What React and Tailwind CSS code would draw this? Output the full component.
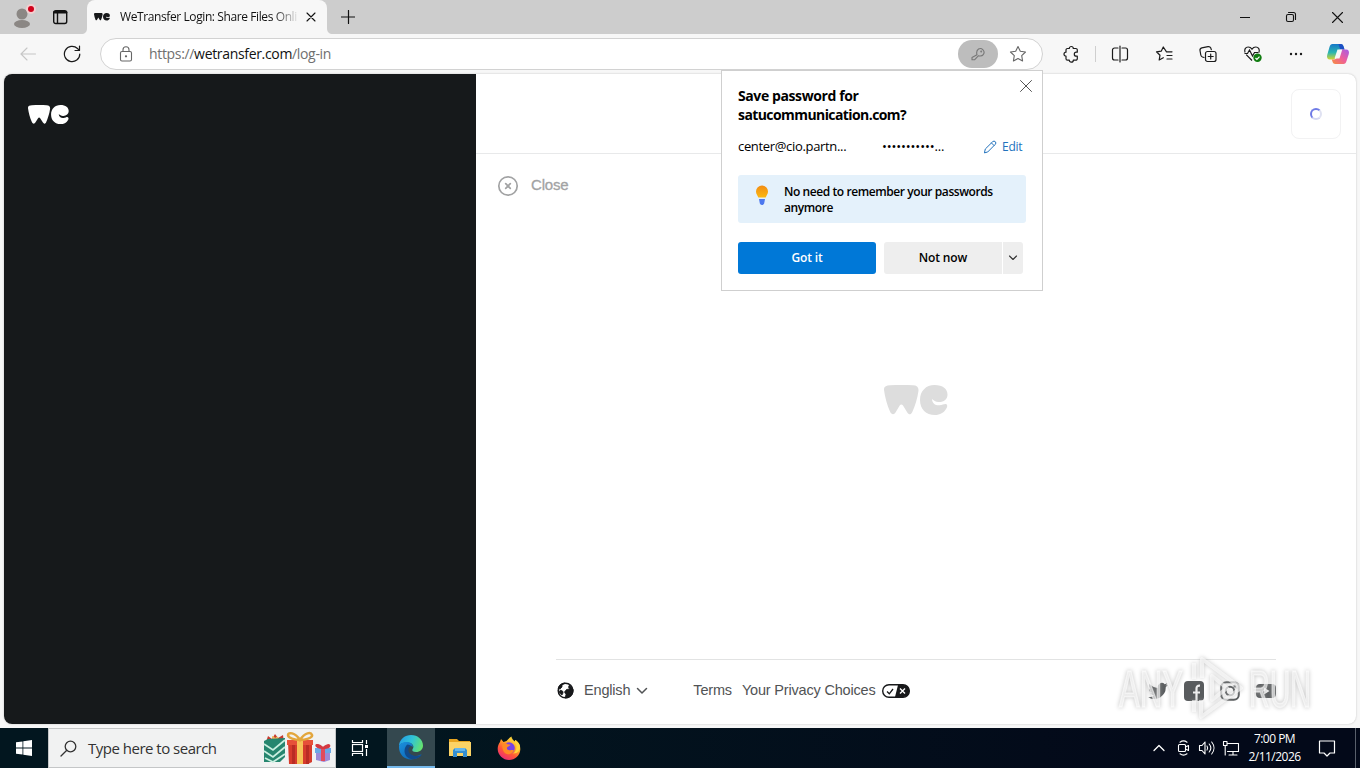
import React, { useState } from 'react';

const Icon = ({ w = 20, h = 20, className = '', sw = 1.1, children }) => (
  <svg
    width={w}
    height={h}
    viewBox={`0 0 ${w} ${h}`}
    fill="none"
    stroke="currentColor"
    strokeWidth={sw}
    strokeLinecap="round"
    strokeLinejoin="round"
    className={`shrink-0 ${className}`}
  >
    {children}
  </svg>
);

const WeLogo = ({ width, className }) => (
  <svg width={width} viewBox="0 0 64 30" fill="currentColor" className={`shrink-0 ${className}`}>
    <path d="M0 5C-.3 1.5 2 .3 6 .2 14 0 22 0 29 .2c4 .2 6 2 5.400 6C33.500 13 31 21 28.300 27c-1.400 3-3.500 3-5 .5L19 20.500c-1-1.500-2.400-1.500-3.300 0L11.500 27.500C10 30 7.500 29.800 6 26.500 3 20 1 12 0 5Z" />
    <path d="M50.500 0C59 0 63.500 4 63.500 9.500c0 5-4 7.800-9 7.500-3-.2-4.800-1.500-6.500-3 .2 4.500 3.500 6.700 7.500 6.300 3-.3 5-1.800 6.500-1.300 1.800.6 1.600 3 0 5C60 27.500 56 30 51 30c-9 0-15-6-15-15S42 0 50.500 0Z" />
  </svg>
);

const TabBar = () => (
  <div className="flex h-[34px] bg-[#cdcdcd] text-[#111]">
    <div className="flex w-[87px] items-center pl-3">
      <svg width="24" height="28" viewBox="0 0 24 28">
        <circle cx="10" cy="11" r="5.500" fill="#8b8784" />
        <ellipse cx="10" cy="21" rx="8" ry="4" fill="#8b8784" />
        <circle cx="19" cy="6" r="5" fill="#f3cfd0" />
        <circle cx="19" cy="6" r="3" fill="#d0021b" />
      </svg>
      <Icon w={16} h={16} sw={1.4} className="ml-4">
        <rect x="1.700" y="1.700" width="13" height="12.800" rx="2" />
        <path d="M2.500 3.300h11.500" strokeWidth="2.500" />
        <path d="M5.500 4v10" />
      </Icon>
    </div>
    <div className="relative flex w-60 items-center rounded-t-lg bg-[#f7f7f7] pl-[7px]">
      <svg width="6" height="6" className="absolute bottom-0 -left-1.5" viewBox="0 0 6 6">
        <path d="M6 0v6H0c4 0 6-2 6-6Z" fill="#f7f7f7" />
      </svg>
      <svg width="6" height="6" className="absolute -right-1.5 bottom-0" viewBox="0 0 6 6">
        <path d="M0 0v6h6C2 6 0 4 0 0Z" fill="#f7f7f7" />
      </svg>
      <WeLogo width={16} className="text-[#17181a]" />
      <span className="ml-2.5 w-[180px] bg-linear-to-r from-[#111] from-85% to-[#11111100] bg-clip-text text-[12px] tracking-[-0.4px] whitespace-nowrap text-transparent">
        WeTransfer Login: Share Files Onli
      </span>
      <Icon w={10} h={10} className="ml-[6px]" sw={1.1}>
        <path d="M1 1l8 8M9 1l-8 8" />
      </Icon>
    </div>
    <div className="flex flex-1 items-center pl-[14px]">
      <Icon w={14} h={14} sw={1.2}>
        <path d="M7.500 .5v13M.5 7h14" />
      </Icon>
    </div>
    <div className="flex w-[138px] items-center justify-around">
      <Icon w={10} h={10}>
        <path d="M0 5.500h10" />
      </Icon>
      <Icon w={12} h={12}>
        <rect x="1.500" y="3.500" width="7" height="7" rx="1.500" />
        <path d="M3.500 1.500h5a2 2 0 0 1 2 2v5" />
      </Icon>
      <Icon w={11} h={11}>
        <path d="M.5.5l10 10M10.500.5l-10 10" />
      </Icon>
    </div>
  </div>
);

const CopilotLogo = () => (
  <svg width="24" height="22" viewBox="0 0 24 22">
    <defs>
      <linearGradient id="cpBlue" x1="0" y1="0" x2="0" y2="1">
        <stop offset="0" stopColor="#1577c9" />
        <stop offset=".55" stopColor="#2bb6b0" />
        <stop offset="1" stopColor="#d5d52f" />
      </linearGradient>
      <linearGradient id="cpPink" x1="1" y1="0" x2="0" y2="1">
        <stop offset="0" stopColor="#a45be8" />
        <stop offset=".5" stopColor="#ee5d9c" />
        <stop offset="1" stopColor="#f6903c" />
      </linearGradient>
    </defs>
    <path d="M6.500 1h8c2 0 2.700 1.300 3.200 3l.8 2.500h-3.500c-2 0-3 1-3.500 2.500l-1.500 5c-.6 1.700-1.500 2.500-3.300 2.500H4C1.500 16.500.5 14.500 1.200 12L3.500 4C4 2 5 1 6.500 1Z" fill="url(#cpBlue)" />
    <path d="M12.500 1h2c2 0 2.700 1.300 3.200 3l.8 2.500h-3c-1 0-1.500-.5-1.800-1.500Z" fill="#1d4fc4" />
    <path d="M17.500 21h-8c-2 0-2.700-1.300-3.200-3l-.5-1.500h2c2 0 2.800-1 3.300-2.500l1.500-5c.6-1.700 1.500-2.500 3.300-2.500H20c2.500 0 3.500 2 2.800 4.500L20.500 18c-.5 2-1.500 3-3 3Z" fill="url(#cpPink)" />
    <path d="M11.500 6.500h4.800l-2.800 9h-5Z" fill="#f7f7f7" />
  </svg>
);

const Toolbar = () => (
  <div className="flex h-10 items-center bg-[#f7f7f7] text-[#1b1b1b]">
    <Icon w={16} h={14} className="ml-5 text-[#c6c6c6]">
      <path d="M15.500 7H1M7 1L1 7l6 6" />
    </Icon>
    <Icon w={18} h={18} sw={1.2} className="ml-[27px]">
      <path d="M16.800 9a7.700 7.700 0 1 1-2.300-5.500L16.300 5.300M16.500 1v4.500H12" />
    </Icon>
    <div className="ml-[19px] flex h-8 w-[943px] items-center rounded-full border border-[#d2d2d2] bg-white pl-[18px]">
      <Icon w={14} h={16} className="text-[#666]">
        <rect x="1.500" y="5.500" width="11" height="9.500" rx="1.500" />
        <path d="M4 5.500V3.800a3 3 0 0 1 6 0v1.700" />
        <circle cx="7" cy="10.300" r=".6" fill="currentColor" />
      </Icon>
      <span className="ml-4 flex-1 pb-px text-[14px] tracking-[-0.33px] text-[#707070]">
        https://<span className="text-[#111]">wetransfer.com</span>/log-in
      </span>
      <div className="flex h-7 w-10 items-center justify-center rounded-full bg-[#bdbdbd]">
        <Icon w={14} h={14} className="text-[#777]">
          <path d="M6 7.800C5.300 5.500 5.900 3.200 7.500 2a3.800 3.800 0 0 1 5 5.300C11.300 8.900 9.500 9.300 7.500 8.700L3.500 12.800H1v-2.200Z" />
          <circle cx="10.200" cy="4.500" r=".4" />
        </Icon>
      </div>
      <Icon w={18} h={18} className="mr-[15px] ml-[11px] text-[#666]">
        <path d="M9 1.500l2.300 4.800 5.200.7-3.800 3.700.9 5.300L9 13.500 4.400 16l.9-5.300L1.500 7l5.200-.7Z" />
      </Icon>
    </div>
    <Icon w={18} h={18} sw={1.2} className="ml-[19px]">
      <path d="M5.500 3.500h1.800a2 2 0 0 1 4 0h2.500a1.500 1.500 0 0 1 1.500 1.500v2.200h-1a2 2 0 0 0 0 4h1v2.500a1.500 1.500 0 0 1-1.500 1.500h-2.500a2 2 0 0 1-4 0H5.500A1.500 1.500 0 0 1 4 13.700v-2.500a2 2 0 0 1 0-4V5a1.500 1.500 0 0 1 1.500-1.500Z" />
    </Icon>
    <div className="ml-[15px] h-4 w-px bg-[#cfcfcf]" />
    <Icon w={18} h={18} sw={1.2} className="ml-[15px]">
      <path d="M7 3H3.500a2 2 0 0 0-2 2v8a2 2 0 0 0 2 2H7M11 3h3.500a2 2 0 0 1 2 2v8a2 2 0 0 1-2 2H11M9 1v16" />
    </Icon>
    <Icon w={18} h={18} sw={1.2} className="ml-[26px]">
      <path d="M17 6.800h-5.500L8.300 2 6.200 6.200l-4.700.6L5 10.200 4.200 15l4.100-2.300M12 10.500h5M12 14H17" />
    </Icon>
    <Icon w={18} h={18} sw={1.2} className="ml-[26px]">
      <rect x="6.500" y="6.500" width="10.500" height="10" rx="2" />
      <path d="M11.700 9v5M9.200 11.500h5M5 12.500L3.500 12C2.500 11.600 2 11 1.800 10L1 5.500c-.2-1.500.6-2.300 1.800-2.600L9 1.600c1.500-.3 2.300.4 2.800 1.500l.5 1.500" />
    </Icon>
    <svg width="20" height="18" viewBox="0 0 20 18" fill="none" stroke="currentColor" strokeWidth="1.200" className="ml-[26px]">
      <path d="M9 15.500L3.200 9.700M2 7.500C1 4.500 2.500 2 5.200 2 7 2 8.200 3 9 4.200 9.800 3 11 2 12.800 2c2.700 0 4.200 2.500 3.200 5.500" />
      <path d="M1.500 8.500h3L6.500 5l3 6 2-3.500h4" />
      <circle cx="14.500" cy="12.800" r="4.200" fill="#107c10" stroke="none" />
      <path d="M12.500 13l1.400 1.400 2.600-2.800" stroke="#fff" />
    </svg>
    <Icon w={16} h={4} sw={0} className="ml-[25px]">
      <circle cx="3" cy="2" r="1.200" fill="currentColor" />
      <circle cx="8" cy="2" r="1.200" fill="currentColor" />
      <circle cx="13" cy="2" r="1.200" fill="currentColor" />
    </Icon>
    <div className="ml-[22px]">
      <CopilotLogo />
    </div>
  </div>
);

const PasswordPopup = () => (
  <div className="absolute top-[70px] left-[721px] h-[221px] w-[322px] border border-[#cfcfcf] bg-white pt-[15px] pl-4 text-black">
    <Icon w={14} h={14} sw={1} className="absolute top-2 right-[9px] text-[#555]">
      <path d="M1.500 1.500l11 11M12.500 1.500l-11 11" />
    </Icon>
    <p className="text-[14px] leading-[19px] font-bold tracking-[-0.58px]">
      <span className="tracking-[-0.4px]">Save password for</span>
      <br />
      satucommunication.com?
    </p>
    <div className="mt-[13px] flex h-5 items-center text-[13px]">
      <span className="w-36 tracking-[-0.33px]">center@cio.partn...</span>
      <span className="w-[101px] tracking-[-0.12px]">•••••••••••...</span>
      <button className="flex items-center pb-px text-[12px] tracking-[-0.25px] text-[#2272bd]">
        <Icon w={14} h={14} sw={1} className="mr-[5px]">
          <path d="M1.500 12.500l.8-3.500L9.700 1.700a1.800 1.800 0 0 1 2.600 2.600L5 11.700ZM8.500 3l2.500 2.500" />
        </Icon>
        Edit
      </button>
    </div>
    <div className="mt-[18px] flex h-12 w-72 rounded-[3px] bg-[#e4f1fb]">
      <svg width="14" height="22" viewBox="0 0 14 22" className="mt-[9px] ml-[17px]">
        <defs>
          <linearGradient id="bulb" x1="0" y1="0" x2="0" y2="1">
            <stop offset="0" stopColor="#f28c13" />
            <stop offset="1" stopColor="#fbb812" />
          </linearGradient>
        </defs>
        <path d="M7 1.500a6 6 0 0 1 6 6c0 2.500-1.500 3.800-2.300 6H3.300C2.500 11.300 1 10 1 7.500a6 6 0 0 1 6-6Z" fill="url(#bulb)" />
        <path d="M4 15h6l-.6 3.200c-.2 1.800-1 2.800-2.400 2.800s-2.200-1-2.400-2.800Z" fill="#4d79ef" />
      </svg>
      <p className="mt-[9px] ml-[15px] text-[12px] leading-4 font-semibold tracking-[-0.42px]">
        No need to remember your passwords
        <br />
        anymore
      </p>
    </div>
    <div className="mt-[19px] flex h-8 text-[12px] font-semibold tracking-[-0.15px]">
      <button className="w-[138px] rounded-[3px] bg-[#0078d7] text-white">Got it</button>
      <button className="ml-2 w-[118px] rounded-l-[3px] bg-[#eeeeee]">Not now</button>
      <button className="ml-px flex w-5 items-center justify-center rounded-r-[3px] bg-[#eeeeee] text-[#333]">
        <Icon w={10} h={6} sw={1.1}>
          <path d="M1.500 1L5 4.500 8.500 1" />
        </Icon>
      </button>
    </div>
  </div>
);

const Watermark = () => (
  <svg width="230" height="80" viewBox="0 0 230 80" className="absolute top-[654px] left-[1110px] drop-shadow-[0_0_2px_#a5a5a5]">
    <g
      fontFamily="'Liberation Sans Narrow', 'Liberation Sans', sans-serif"
      fontSize="51"
      stroke="#ffffff"
      strokeOpacity=".5"
      strokeWidth="1.500"
      fill="#ffffff"
      fillOpacity=".6"
    >
      <text x="9" y="53" textLength="64" lengthAdjust="spacingAndGlyphs">ANY</text>
      <text x="139" y="53" textLength="62" lengthAdjust="spacingAndGlyphs">RUN</text>
    </g>
    <path
      d="M92 24V5l39 29-40 29V46M102 22v24l15-12ZM84 9v16M84 46v12"
      fill="none"
      stroke="#fff"
      strokeOpacity=".6"
      strokeWidth="4"
      strokeLinejoin="round"
    />
  </svg>
);

const SocialIcons = () => (
  <div className="ml-auto flex items-center text-[#595c5e]">
    <svg width="20" height="18" viewBox="0 0 24 22" fill="currentColor">
      <path d="M24 3.500c-.9.400-1.800.7-2.800.8A5 5 0 0 0 23.300 1.500c-1 .6-2 1-3.100 1.200a5 5 0 0 0-8.500 4.500C7.700 7 4 5 1.700 2A5 5 0 0 0 3.200 8.600C2.400 8.600 1.600 8.400 1 8a5 5 0 0 0 4 5c-.7.200-1.500.2-2.300.1a5 5 0 0 0 4.600 3.400A10 10 0 0 1 0 18.500a14 14 0 0 0 21.500-12.400C22.500 5.400 23.400 4.500 24 3.500Z" />
    </svg>
    <svg width="20" height="20" viewBox="0 0 20 20" className="ml-4">
      <rect width="20" height="20" rx="4" fill="currentColor" />
      <path d="M12.500 20v-8M9 11.500h7M12.500 12V7.500c0-2 1-3 3.500-2.800" fill="none" stroke="#eee" strokeWidth="2.200" />
    </svg>
    <Icon w={20} h={20} sw={2} className="ml-4">
      <rect x="1.200" y="1.200" width="17.600" height="17.600" rx="5" />
      <circle cx="10" cy="10" r="4.200" />
      <circle cx="15" cy="5" r=".5" />
    </Icon>
    <svg width="20" height="14" viewBox="0 0 20 14" className="ml-4">
      <rect width="20" height="14" rx="4" fill="currentColor" />
      <path d="M8 3.500l5.500 3.500L8 10.500Z" fill="#f4f4f4" />
    </svg>
  </div>
);

const Footer = () => (
  <footer className="mx-20 flex h-[65px] items-center border-t border-[#e2e3e3] pb-[3px] font-['Liberation_Sans',sans-serif] text-[14.500px] tracking-[-0.18px] text-[#515355]">
    <svg width="17" height="17" viewBox="0 0 17 17" className="ml-px">
      <circle cx="8.500" cy="8.500" r="7.300" fill="#fff" stroke="#17181a" strokeWidth="1.500" />
      <path d="M8 1L5 3v2L3 7 1 6.500A8 8 0 0 1 8 1ZM16 7a7.500 7.500 0 0 1-8 9l1-3.500L7.500 10l2-2.500 3-.5-1-2L12.500 3ZM3.500 8l2.500 1.500V11l-1 2-3-3Z" fill="#17181a" stroke="#17181a" strokeWidth=".8" />
    </svg>
    <span className="ml-[10px]">English</span>
    <Icon w={12} h={8} sw={1.5} className="ml-[6px]">
      <path d="M1.500 1.500L6 6l4.500-4.500" />
    </Icon>
    <span className="ml-[45px]">Terms</span>
    <span className="ml-[10px]">Your Privacy Choices</span>
    <svg width="28" height="14" viewBox="0 0 28 14" fill="none" className="ml-1.5 shrink-0">
      <rect x=".7" y=".7" width="26.600" height="12.600" rx="6.300" fill="#fff" stroke="#17181a" strokeWidth="1.400" />
      <path d="M16 1h5.500a6 6 0 0 1 0 12H13Z" fill="#17181a" />
      <path d="M5 7.500l2.300 2.300L11 5" stroke="#17181a" strokeWidth="1.300" />
      <path d="M18 4.500l5 5M23 4.500l-5 5" stroke="#fff" strokeWidth="1.400" />
    </svg>
    <SocialIcons />
  </footer>
);

const Gifts = () => (
  <svg width="70" height="36" viewBox="0 0 70 36" className="mt-0.5 ml-auto shrink-0">
    <path d="M3 11l2-6 4 3 3-5 3 4 5-3 1 8Z" fill="#c73a2e" />
    <path d="M12 7c-3-5-5 1 0 2 5 0 4-6 0-2Z" fill="#eeb659" />
    <path d="M1 10l4-2 17-1v19l-5 5H1Z" fill="#26866f" />
    <path d="M1 13l9 6L22 9M1 20l9 6 12-10M2 27l8 4 12-8" fill="none" stroke="#c9efe0" strokeWidth="1.800" />
    <path d="M25 11h24v20l-4 2H26Z" fill="#d63b2c" />
    <path d="M24 9h26v5H24Z" fill="#e65039" />
    <path d="M29 14h3v19h-3ZM43 14h3v19h-3Z" fill="#b92c24" />
    <path d="M34 9h6v24h-6Z" fill="#f6c257" />
    <path d="M37 9C32 1 25 1 25 4s7 5 12 5C42 9 50 7 49 4S42 1 37 9Z" fill="none" stroke="#e3a63c" strokeWidth="2.500" />
    <path d="M52 17h16v5H52Z" fill="#6aa8e6" />
    <path d="M53 22h14v7l-6 2-8-2Z" fill="#9c8ad8" />
    <path d="M58 17h4v13h-4Z" fill="#e24b5c" />
    <path d="M60 17c-9-7-9 0 0 0 8-7 9 1 0 0Z" fill="#e24b5c" stroke="#d43a42" strokeWidth="2" />
  </svg>
);

const EdgeLogo = () => (
  <svg width="26" height="26" viewBox="0 0 26 26">
    <defs>
      <linearGradient id="edgeTop" x1="0" y1=".3" x2="1" y2=".6">
        <stop offset="0" stopColor="#249ee5" />
        <stop offset=".5" stopColor="#31c4d6" />
        <stop offset="1" stopColor="#66e36c" />
      </linearGradient>
      <linearGradient id="edgeLow" x1="0" y1="0" x2="1" y2="1">
        <stop offset="0" stopColor="#1b91df" />
        <stop offset="1" stopColor="#0a5aa8" />
      </linearGradient>
    </defs>
    <path d="M1 11C2 5 7 1 13 1c7 0 12 5 12 10.500 0 4-3 6.500-7 6.500-3 0-4.300-1.300-3.500-2.800C17 12 14 8.500 9.500 8.500 5.500 8.500 2 9.500 1 12Z" fill="url(#edgeTop)" />
    <path d="M1 13C1 9.500 5 8 8.500 8c4 0 6.500 2.200 6.500 5-2-2-5-.5-5.500 2.500C9 20 14 22.500 18 22c2.500-.3 4-1.200 5-1.500.6-.2.700.2.400.6C21 24 17.500 25.500 13 25.500 6 25.500 1 20 1 13Z" fill="url(#edgeLow)" />
    <path d="M9.500 10.500C6 13 5.500 19 8.500 22.500c2 2 5 3 8 2.500 3-.6 5.500-2 7-4-5 2.500-12 .5-13-4-.4-2.300.5-4.500 3-5-1.300-1-2.600-1.500-4-1.500Z" fill="#114a8b" />
  </svg>
);

const FolderIcon = () => (
  <svg width="22" height="20" viewBox="0 0 22 20">
    <path d="M0 1h8l2 2h11v5H0Z" fill="#e8a520" />
    <path d="M0 4h22v14H0Z" fill="#fbd366" />
    <path d="M4 19v-7l2-2h10l2 2v7h-4v-4H8v4Z" fill="#358fd1" />
    <path d="M6 10h10v3H6Z" fill="#64b6ec" />
  </svg>
);

const FirefoxLogo = () => (
  <svg width="24" height="24" viewBox="0 0 24 24">
    <defs>
      <linearGradient id="fox" x1=".8" y1="0" x2=".2" y2="1">
        <stop offset="0" stopColor="#fff04b" />
        <stop offset=".35" stopColor="#ffad26" />
        <stop offset=".65" stopColor="#ff5638" />
        <stop offset="1" stopColor="#e82580" />
      </linearGradient>
    </defs>
    <path d="M3 6l1-3 2.500 3 3-1C11 3.500 12.500 1.500 14.500.5c0 2 1.500 3.500 3 5L18.500 4C22 7 23.500 10 23.300 13.500 23 19.500 18 24 12 24S.7 19 .7 13C.7 10 1.500 8 3 6Z" fill="url(#fox)" />
    <circle cx="12" cy="12" r="5.800" fill="#7542e5" />
    <path d="M5.500 7.500c2-1 4-.5 5 .7l3 .5c-.5 1.500-3 1.500-3.500 3-.6 2 1.500 3 3.500 2.500 1.500-.4 3 0 3.500-.5-1 3-3.500 4.800-6 4.500-4-.5-6.500-5-5.500-10.700Z" fill="#ff8a26" />
    <path d="M14.500.5c0 3 5 5 5 10 0 3-1.500 6-3.500 7 5 0 7.500-3.500 7-7.500C22.500 7 20.500 5.500 18.500 4l-1 1.500c-1.500-1.500-3-3-3-5Z" fill="#ffd43a" />
  </svg>
);

const Taskbar = () => (
  <div className="flex h-10 items-stretch bg-linear-to-r from-[#02161f] from-30% to-[#030919] to-85% text-white">
    <div className="flex w-12 items-center justify-center">
      <svg width="16" height="16" viewBox="0 0 16 16" fill="#fff">
        <path d="M0 2.300l6.500-.9v6.200H0ZM7.300 1.300L16 0v7.600H7.300ZM0 8.400h6.500v6.200L0 13.700ZM7.300 8.400H16V16l-8.700-1.200Z" />
      </svg>
    </div>
    <div className="flex w-72 items-center border border-[#c4c6c7] bg-[#f1f2f2] pr-[2px] pl-[11px] text-[#333]">
      <Icon w={17} h={17} sw={1.3}>
        <circle cx="10.500" cy="6.500" r="5.300" />
        <path d="M6.800 10.200L1 16" />
      </Icon>
      <span className="ml-[11px] text-[15px] tracking-[-0.5px] whitespace-nowrap">Type here to search</span>
      <Gifts />
    </div>
    <div className="flex w-[51px] items-center justify-center pr-[3px]">
      <svg width="18" height="18" viewBox="0 0 18 18" fill="none" stroke="#fff" strokeWidth="1.200">
        <rect x="1.500" y="5.500" width="10" height="7" />
        <path d="M1.500 1v2.500h10V1M1.500 17v-2.500h10V17M15.500 1v4M15.500 10v7" />
        <path d="M14 6h3v3h-3Z" fill="#fff" stroke="none" />
      </svg>
    </div>
    <div className="flex w-12 items-center justify-center border-b-2 border-[#75b9ec] bg-[#34484f]">
      <EdgeLogo />
    </div>
    <div className="flex w-[50px] items-center justify-center">
      <FolderIcon />
    </div>
    <div className="flex w-12 items-center justify-center">
      <FirefoxLogo />
    </div>
    <div className="ml-auto flex items-center">
      <Icon w={12} h={8} sw={1.3}>
        <path d="M1 6.500l5-5 5 5" />
      </Icon>
      <Icon w={14} h={16} sw={1.1} className="ml-3">
        <rect x="1.500" y="4.500" width="7" height="7" rx="1" />
        <path d="M8.500 7l3-1.500v5L8.500 9M3 2.200c2-1.500 5-1.500 7 0M3 13.800c2 1.500 5 1.500 7 0" />
      </Icon>
      <Icon w={18} h={16} sw={1.1} className="ml-[7px]">
        <path d="M1.500 5.500h2.500l3-3.500v12l-3-3.500H1.500ZM9 6c.8 1.200.8 2.800 0 4M11.200 4c2 2.400 2 5.600 0 8M13.700 2c3 3.600 3 8.400 0 12" />
      </Icon>
      <Icon w={18} h={16} sw={1.1} className="ml-[6px]">
        <path d="M5 3.500h11.500v8H5.500M11 11.500V15M7 15h8M1.500 1.500h3.500v4H1.500ZM3.200 5.500v9.500" />
      </Icon>
      <div className="ml-[7px] w-[55px] text-center text-[12px] leading-[18px] tracking-[-0.52px] whitespace-nowrap">
        <p>7:00 PM</p>
        <p>2/11/2026</p>
      </div>
      <Icon w={18} h={18} sw={1.2} className="ml-[16px]">
        <path d="M1.500 2h15v12H12l-3 3-3-3H1.500Z" />
      </Icon>
      <div className="ml-[19px] h-10 w-px bg-[#59606b]" />
      <div className="w-1" />
    </div>
  </div>
);

const App = () => {
  const [showPopup] = useState(true);

  return (
    <div className="relative flex h-[768px] w-[1360px] flex-col overflow-hidden bg-[#f7f7f7] font-['Open_Sans','Noto_Sans',sans-serif]">
      <TabBar />
      <Toolbar />

      {/* Page */}
      <div className="mx-1 mb-1 flex flex-1 overflow-hidden rounded-lg bg-white shadow-[0_0_2px_#bbb]">
        <div className="w-[472px] bg-[#16191b] pt-[31px] pl-6">
          <WeLogo width={41} className="text-white" />
        </div>
        <div className="flex flex-1 flex-col">
          <div className="flex h-20 items-center justify-end border-b border-[#e8e9ea] pr-[15px]">
            <div className="flex size-[50px] items-center justify-center rounded-lg border border-[#f2f2f3]">
              <div className="size-[12px] rounded-full border-2 border-[#6f7be6] border-r-[#e0e2f2] border-b-[#d5d8f2]" />
            </div>
          </div>
          <div className="flex items-center pt-5 pl-[21px] text-[#a2a3a4]">
            <Icon w={22} h={22} sw={1.7} className="mt-[1px]">
              <circle cx="11" cy="11" r="9.200" />
              <path d="M8.700 8.700l4.600 4.600M13.300 8.700l-4.600 4.600" />
            </Icon>
            <span className="ml-3 font-['Liberation_Sans',sans-serif] text-[15px] tracking-[-0.2px] [-webkit-text-stroke:0.3px_#a2a3a4]">
              Close
            </span>
          </div>
          <div className="flex flex-1 justify-center pt-[188px] pr-px">
            <WeLogo width={64} className="self-start text-[#dddddd]" />
          </div>
          <Footer />
        </div>
      </div>

      <Taskbar />
      {showPopup && <PasswordPopup />}
      <Watermark />
    </div>
  );
};

export default App;
